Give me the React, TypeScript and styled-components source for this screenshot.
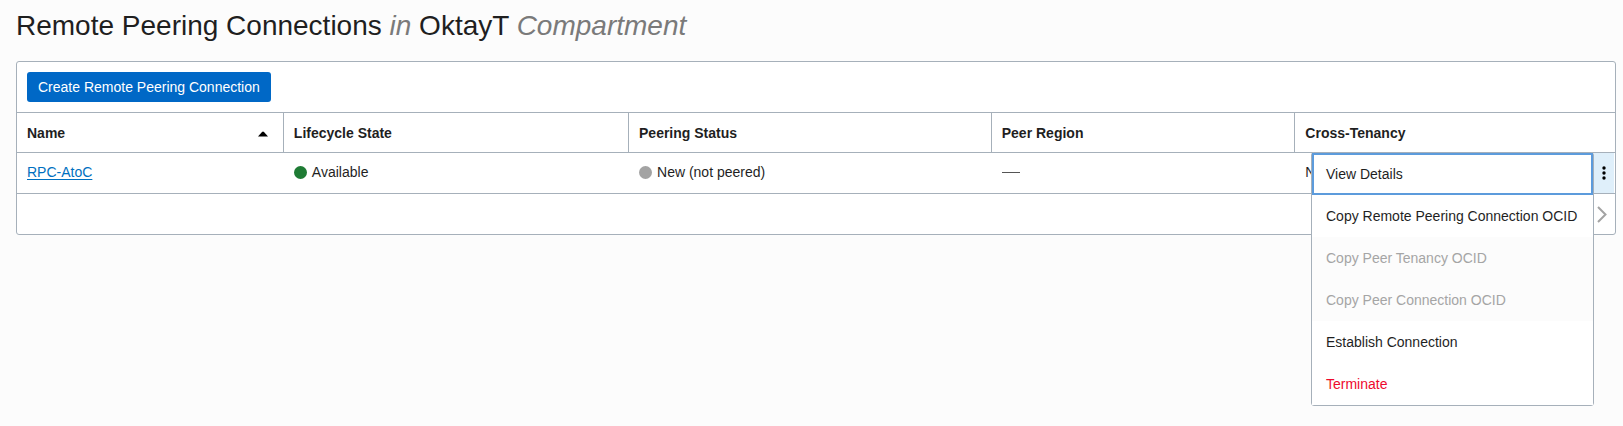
import React from "react";
import styled, { createGlobalStyle } from "styled-components";

const line = "#a6b0ba";
const ink = "#1f1f1f";

const GlobalStyle = createGlobalStyle`
  * { box-sizing: border-box; }
  body {
    margin: 0;
    background: #fcfcfc;
    color: ${ink};
    font: 14px/20px "Liberation Sans", Arial, sans-serif;
  }
  button { font: inherit; cursor: pointer; }
`;

const Page = styled.main`
  min-height: 100vh;
  padding: 8px 7px 20px 16px;
`;

const Title = styled.h1`
  margin: 0 0 17px;
  font-size: 28px;
  line-height: 36px;
  font-weight: 400;
`;

const Muted = styled.em`
  color: #7a7a7a;
`;

const Panel = styled.section`
  border: 1px solid ${line};
  border-radius: 3px;
  background: #fff;
`;

const Toolbar = styled.div`
  padding: 10px;
`;

const PrimaryButton = styled.button`
  display: block;
  height: 30px;
  padding: 0 11px;
  border: 0;
  border-radius: 3px;
  background: #0068c6;
  color: #fff;
`;

const Table = styled.table`
  width: 100%;
  table-layout: fixed;
  border-collapse: separate;
  border-spacing: 0;
`;

const Column = styled.col<{ $width?: string }>`
  width: ${({ $width }) => $width ?? "auto"};
`;

const HeaderCell = styled.th`
  height: 41px;
  padding: 0 10px;
  border-top: 1px solid ${line};
  border-right: 1px solid ${line};
  border-bottom: 1px solid ${line};
  text-align: left;
  font-weight: 700;
  &:last-child { border-right: 0; }
`;

const SortButton = styled.button`
  display: flex;
  width: 100%;
  align-items: center;
  justify-content: space-between;
  padding: 0 5px 0 0;
  border: 0;
  background: none;
  color: inherit;
  font-weight: 700;
`;

const Cell = styled.td`
  height: 41px;
  padding: 0 10px 2px;
  border-bottom: 1px solid ${line};
`;

const ActionCell = styled(Cell)`
  padding: 0 1px 0 0;
`;

const NameLink = styled.a`
  color: #0070c0;
  text-decoration: underline;
  text-underline-offset: 2px;
`;

const Status = styled.span`
  display: flex;
  align-items: center;
  gap: 5px;
`;

const Dot = styled.span<{ $color: string }>`
  width: 13px;
  height: 13px;
  border-radius: 50%;
  background: ${({ $color }) => $color};
`;

const EmptyValue = styled.span`
  display: block;
  width: 18px;
  height: 1px;
  background: #555;
`;

const ActionAnchor = styled.div`
  position: relative;
  height: 40px;
`;

const KebabButton = styled.button`
  display: flex;
  width: 100%;
  height: 100%;
  align-items: center;
  justify-content: center;
  padding: 0 0 0 1px;
  border: 0;
  background: #dfeffa;
`;

const Menu = styled.div`
  position: absolute;
  z-index: 1;
  top: -1px;
  right: 100%;
  width: 283px;
  border: 1px solid ${line};
  border-radius: 3px;
  background: #fff;
`;

const MenuItem = styled.button<{ $danger?: boolean }>`
  display: block;
  width: 100%;
  height: 42px;
  padding: 0 14px;
  border: 0;
  background: #fff;
  color: ${({ $danger }) => ($danger ? "#ee0a2e" : ink)};
  text-align: left;
  white-space: nowrap;
  &:first-child {
    outline: 2px solid #5c9bdc;
    outline-offset: -2px;
  }
  &:disabled {
    background: #fcfcfc;
    color: #a5a5a5;
    cursor: default;
  }
`;

const Footer = styled.footer`
  display: flex;
  height: 40px;
  align-items: center;
  justify-content: flex-end;
  padding-right: 8px;
`;

const PageButton = styled.button`
  display: flex;
  padding: 0;
  border: 0;
  background: none;
`;

const menuItems = [
  { label: "View Details" },
  { label: "Copy Remote Peering Connection OCID" },
  { label: "Copy Peer Tenancy OCID", disabled: true },
  { label: "Copy Peer Connection OCID", disabled: true },
  { label: "Establish Connection" },
  { label: "Terminate", danger: true },
];

export default function App() {
  return (
    <>
      <GlobalStyle />
      <Page>
        <Title>
          Remote Peering Connections <Muted>in</Muted> OktayT <Muted>Compartment</Muted>
        </Title>
        <Panel>
          <Toolbar>
            <PrimaryButton type="button">Create Remote Peering Connection</PrimaryButton>
          </Toolbar>
          <Table>
            <colgroup>
              <Column $width="16.7%" />
              <Column $width="21.6%" />
              <Column $width="22.7%" />
              <Column $width="19%" />
              <Column />
              <Column $width="21px" />
            </colgroup>
            <thead>
              <tr>
                <HeaderCell aria-sort="ascending">
                  <SortButton type="button">
                    Name
                    <svg width="10" height="8" viewBox="0 0 10 8" aria-hidden="true">
                      <path d="M0 7.5 4 2.9Q5 2 6 2.9L10 7.5Z" />
                    </svg>
                  </SortButton>
                </HeaderCell>
                <HeaderCell>Lifecycle State</HeaderCell>
                <HeaderCell>Peering Status</HeaderCell>
                <HeaderCell>Peer Region</HeaderCell>
                <HeaderCell colSpan={2}>Cross-Tenancy</HeaderCell>
              </tr>
            </thead>
            <tbody>
              <tr>
                <Cell><NameLink href="#rpc">RPC-AtoC</NameLink></Cell>
                <Cell><Status><Dot $color="#1e7b34" />Available</Status></Cell>
                <Cell><Status><Dot $color="#a3a3a3" />New (not peered)</Status></Cell>
                <Cell><EmptyValue /></Cell>
                <Cell>No</Cell>
                <ActionCell>
                  <ActionAnchor>
                    <KebabButton type="button" aria-label="Actions" aria-expanded="true">
                      <svg width="4" height="14" viewBox="0 0 4 14" aria-hidden="true">
                        <circle cx="2" cy="2" r="1.7" />
                        <circle cx="2" cy="7" r="1.7" />
                        <circle cx="2" cy="12" r="1.7" />
                      </svg>
                    </KebabButton>
                    <Menu role="menu">
                      {menuItems.map(({ label, disabled, danger }) => (
                        <MenuItem key={label} type="button" role="menuitem" disabled={disabled} $danger={danger}>
                          {label}
                        </MenuItem>
                      ))}
                    </Menu>
                  </ActionAnchor>
                </ActionCell>
              </tr>
            </tbody>
          </Table>
          <Footer>
            <PageButton type="button" aria-label="Next page">
              <svg width="10" height="17" viewBox="0 0 10 17" fill="none" stroke="#a3a3a3" strokeWidth="2" aria-hidden="true">
                <path d="M1 1 8.5 8.5 1 16" />
              </svg>
            </PageButton>
          </Footer>
        </Panel>
      </Page>
    </>
  );
}
